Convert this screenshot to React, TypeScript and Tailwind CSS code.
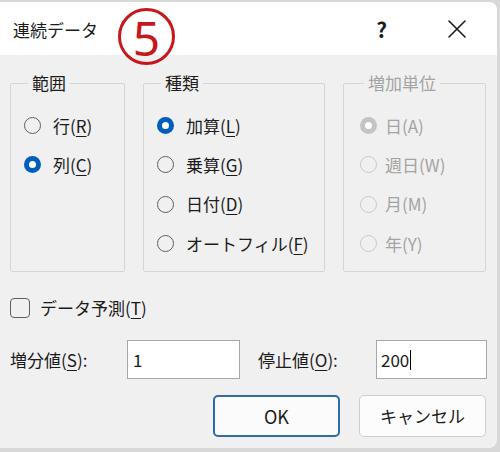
import React from "react";

const FONT = { fontFamily: '"Noto Sans CJK JP", "Noto Sans", sans-serif' };

function Radio({ checked, disabled }: { checked?: boolean; disabled?: boolean }) {
  if (checked) {
    return (
      <span
        className={`flex items-center justify-center w-[17px] h-[17px] rounded-full shrink-0 ${
          disabled ? "bg-[#c4c4c4]" : "bg-[#005fb8]"
        }`}
      >
        <span className="w-[7px] h-[7px] rounded-full bg-white" />
      </span>
    );
  }
  return (
    <span
      className={`w-[17px] h-[17px] rounded-full border shrink-0 bg-transparent ${
        disabled ? "border-[#c9c9c9]" : "border-[#5f5f5f]"
      }`}
    />
  );
}

function Row({
  label,
  k,
  checked,
  disabled,
  gap,
}: {
  label: string;
  k: string;
  checked?: boolean;
  disabled?: boolean;
  gap: string;
}) {
  return (
    <div className={`flex items-center h-[39.3px] ${gap}`}>
      <Radio checked={checked} disabled={disabled} />
      <span className={`text-[17px] leading-[22px] ${disabled ? "text-[#a3a3a3]" : "text-[#1b1b1b]"}`}>
        {label}(
        {disabled ? k : <span className="underline underline-offset-[3px]">{k}</span>})
      </span>
    </div>
  );
}

function Group({
  title,
  width,
  pl,
  disabled,
  children,
}: {
  title: string;
  width: string;
  pl: string;
  disabled?: boolean;
  children: React.ReactNode;
}) {
  return (
    <fieldset className={`${width} h-[200px] border border-[#d6d6d6] rounded-[2px] ${pl} pt-[12px]`}>
      <legend
        className={`ml-[4px] px-[4px] text-[17px] leading-[22px] ${
          disabled ? "text-[#a3a3a3]" : "text-[#1b1b1b]"
        }`}
      >
        {title}
      </legend>
      {children}
    </fieldset>
  );
}

export default function App() {
  return (
    <div className="w-[500px] h-[452px] bg-[#d8d8d8] pt-[2px] pr-[3px] pb-[4px]" style={FONT}>
      <div className="h-full bg-[#f0f0f0] rounded-r-[8px] overflow-hidden flex flex-col">
        {/* title bar */}
        <div className="relative h-[53px] bg-white flex items-center pl-[13px] shrink-0">
          <span className="text-[17px] leading-[22px] text-[#1b1b1b] mt-[2px]">連続データ</span>
          <span className="ml-auto mr-[60px] text-[21px] leading-[24px] font-bold text-[#1b1b1b]">?</span>
          <svg width="20" height="20" viewBox="0 0 20 20" className="mr-[30px]">
            <path d="M2 2 L18 18 M18 2 L2 18" stroke="#1b1b1b" strokeWidth="1.6" strokeLinecap="round" />
          </svg>
          <div className="absolute left-[118px] top-[6px] w-[57px] h-[57px] rounded-full border-[3px] border-[#c9161c] flex items-center justify-center z-10">
            <span
              className="text-[48px] leading-[48px] text-[#c9161c] mt-[2px]"
              style={{ fontFamily: '"Noto Sans", sans-serif' }}
            >
              5
            </span>
          </div>
        </div>

        {/* body */}
        <div className="flex flex-col pl-[10px] pt-[17px]">
          <div className="flex gap-[18px]">
            <Group title="範囲" width="w-[115px]" pl="pl-[13px]">
              <Row label="行" k="R" gap="gap-[12px]" />
              <Row label="列" k="C" checked gap="gap-[12px]" />
            </Group>
            <Group title="種類" width="w-[182px]" pl="pl-[13px]">
              <Row label="加算" k="L" checked gap="gap-[12px]" />
              <Row label="乗算" k="G" gap="gap-[12px]" />
              <Row label="日付" k="D" gap="gap-[12px]" />
              <Row label="オートフィル" k="F" gap="gap-[12px]" />
            </Group>
            <Group title="増加単位" width="w-[143px]" pl="pl-[16px]" disabled>
              <Row label="日" k="A" checked disabled gap="gap-[8px]" />
              <Row label="週日" k="W" disabled gap="gap-[8px]" />
              <Row label="月" k="M" disabled gap="gap-[8px]" />
              <Row label="年" k="Y" disabled gap="gap-[8px]" />
            </Group>
          </div>

          {/* checkbox */}
          <div className="flex items-center gap-[10px] h-[22px] mt-[25px]">
            <span className="w-[20px] h-[20px] border border-[#5f5f5f] rounded-[4px] bg-transparent" />
            <span className="text-[17px] leading-[22px] text-[#1b1b1b]">
              データ予測(<span className="underline underline-offset-[3px]">T</span>)
            </span>
          </div>

          {/* inputs */}
          <div className="flex items-center h-[39px] mt-[21px]">
            <span className="w-[117px] text-[17px] leading-[22px] text-[#1b1b1b]">
              増分値(<span className="underline underline-offset-[3px]">S</span>):
            </span>
            <div className="w-[113px] h-[39px] bg-white border border-[#a7a7a7] flex items-center pl-[5px] text-[17px] text-[#1b1b1b]">
              1
            </div>
            <span className="ml-[18px] w-[118px] text-[17px] leading-[22px] text-[#1b1b1b]">
              停止値(<span className="underline underline-offset-[3px]">O</span>):
            </span>
            <div className="w-[111px] h-[39px] bg-white border border-[#a7a7a7] flex items-center pl-[4px] text-[17px] text-[#1b1b1b]">
              200
              <span className="w-[1px] h-[20px] bg-black ml-[1px]" />
            </div>
          </div>

          {/* buttons */}
          <div className="flex gap-[19px] pl-[203px] mt-[16px]">
            <div className="w-[127px] h-[42px] rounded-[5px] border-2 border-[#2e6ba8] bg-[#fbfbfb] flex items-center justify-center text-[18px] text-[#1b1b1b]">
              OK
            </div>
            <div className="w-[127px] h-[42px] rounded-[5px] border border-[#cfcfcf] bg-[#fcfcfc] flex items-center justify-center text-[17px] text-[#1b1b1b]">
              キャンセル
            </div>
          </div>
        </div>
      </div>
    </div>
  );
}
